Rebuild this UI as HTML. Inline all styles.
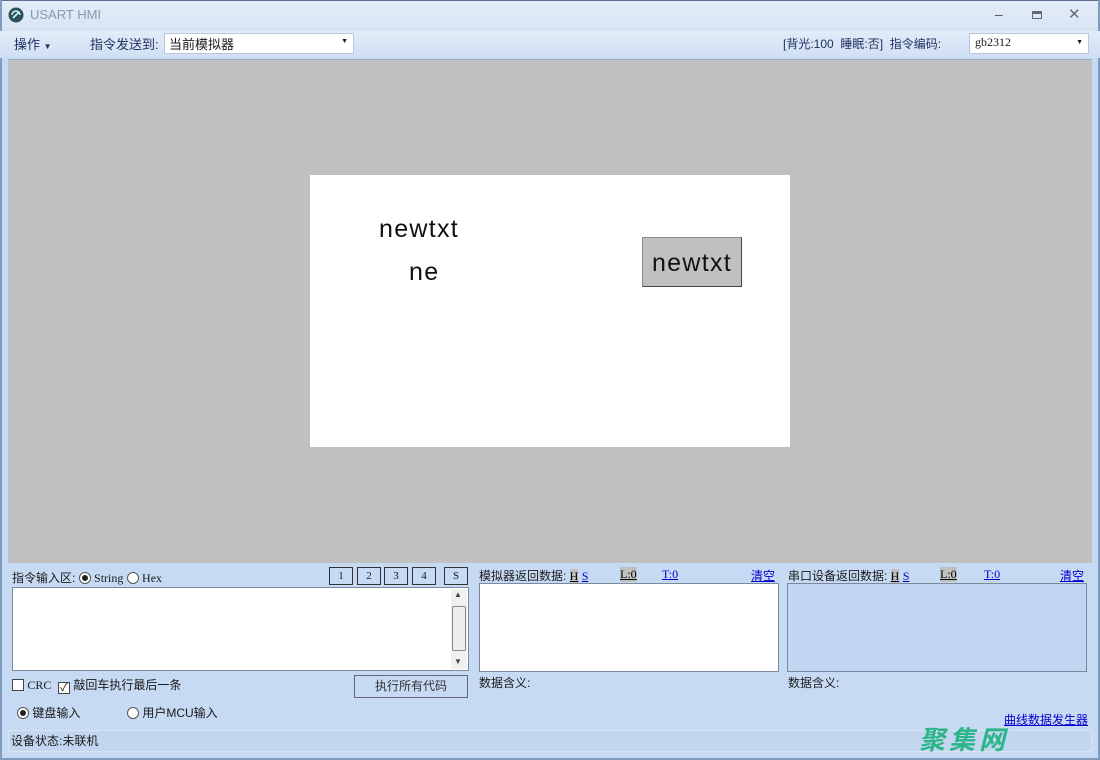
<!DOCTYPE html>
<html><head><meta charset="utf-8"><style>
*{margin:0;padding:0;box-sizing:border-box}
body{width:1100px;height:760px;overflow:hidden;background:#c6daf3;font-family:"Liberation Sans","Noto Sans CJK SC",sans-serif;font-size:12px;color:#1a1a1a;position:relative}
.a{position:absolute;white-space:nowrap}
.mono{font-family:"Liberation Serif","Noto Sans CJK SC",serif}
a,.lk{color:#0000cc;text-decoration:underline}
.box{position:absolute;border:1px solid #7a8a9c}
.nb{position:absolute;top:567px;width:24px;height:18px;border:1px solid #333;font-family:"Liberation Serif",serif;font-size:11px;text-align:center;line-height:16px;background:#c6daf3}
.rad{display:inline-block;width:12px;height:12px;border:1px solid #555;border-radius:50%;background:#fff;vertical-align:-2px;position:relative}
.rad.on::after{content:"";position:absolute;left:2px;top:2px;width:6px;height:6px;border-radius:50%;background:#222}
.chk{display:inline-block;width:12px;height:12px;border:1px solid #444;background:#fff;vertical-align:-2px;position:relative;font-size:11px;line-height:10px;text-align:center}
.hl{background:#c0c0c0;color:#000;text-decoration:underline}
</style></head><body>
<div class="a" style="left:0;top:0;width:1100px;height:31px;background:linear-gradient(#e4edf8,#d7e4f4);border-top:1px solid #5a7090"></div>
<div class="a" style="left:0;top:0;width:2px;height:760px;background:#7f9bbd"></div>
<div class="a" style="right:0;top:0;width:2px;height:760px;background:#7f9bbd"></div>
<div class="a" style="left:0;bottom:0;width:1100px;height:2px;background:#7f9bbd"></div>
<svg class="a" style="left:8px;top:7px" width="16" height="16"><circle cx="8" cy="8" r="7.5" fill="#2f4f5f"/><path d="M4 8a4 4 0 0 1 8 0M5 11l6-6" stroke="#cfe" stroke-width="1.6" fill="none"/></svg>
<div class="a" style="left:30px;top:7px;color:#8898b0;font-size:13px">USART HMI</div>
<div class="a" style="left:995px;top:6px;font-size:14px;color:#555">–</div>
<div class="a" style="left:1032px;top:11px;width:10px;height:8px;border:1px solid #667;border-top-width:3px"></div>
<div class="a" style="left:1068px;top:5px;font-size:15px;color:#667">✕</div>
<div class="a" style="left:0;top:31px;width:1100px;height:27px;background:linear-gradient(#e3ecf8,#cfdff3)"></div>
<div class="a" style="left:14px;top:34px;font-size:13px;color:#203060">操作 <span style="font-size:8px">▼</span></div>
<div class="a" style="left:90px;top:34px;font-size:13px;color:#203060">指令发送到:</div>
<div class="a" style="left:164px;top:33px;width:190px;height:21px;background:#fff;border:1px solid #b8c8dc;padding:0 4px;font-size:13px">当前模拟器<span style="position:absolute;right:5px;top:4px;font-size:7px">▼</span></div>
<div class="a" style="left:783px;top:35px;font-size:12px;color:#203060">[背光:100 &nbsp;睡眠:否] &nbsp;指令编码:</div>
<div class="a" style="left:969px;top:33px;width:120px;height:21px;background:#fff;border:1px solid #b8c8dc;padding:1px 5px;font-size:12px" ><span class="mono">gb2312</span><span style="position:absolute;right:5px;top:5px;font-size:7px">▼</span></div>
<div class="a" style="left:8px;top:59px;width:1084px;height:504px;background:#c0c0c0;border-top:1px solid #9ab"></div>
<div class="a" style="left:310px;top:175px;width:480px;height:272px;background:#fff"></div>
<div class="a" style="left:379px;top:215px;font-size:25px;color:#111;letter-spacing:1.3px">newtxt</div>
<div class="a" style="left:409px;top:258px;font-size:25px;color:#111;letter-spacing:1.3px">ne</div>
<div class="a" style="left:642px;top:237px;width:100px;height:50px;background:#c0c0c0;border:1px solid #888;border-right-color:#444;border-bottom-color:#444;font-size:25px;text-align:center;line-height:50px;color:#111;letter-spacing:1.3px">newtxt</div>
<div class="a" style="left:12px;top:569px">指令输入区: <span class="rad on"></span> <span class="mono" style="font-size:12px">String</span> <span class="rad"></span> <span class="mono" style="font-size:12px">Hex</span></div>
<div class="nb" style="left:329px">1</div><div class="nb" style="left:357px">2</div><div class="nb" style="left:384px">3</div><div class="nb" style="left:412px">4</div><div class="nb" style="left:444px">S</div>
<div class="box" style="left:12px;top:587px;width:457px;height:84px;background:#fff"></div>
<div class="a" style="left:451px;top:589px;width:16px;height:80px;background:#f0f0f0"></div>
<div class="a" style="left:452px;top:606px;width:14px;height:45px;border:1px solid #888;border-radius:2px;background:#eee"></div>
<div class="a" style="left:454px;top:590px;font-size:8px;color:#444">▲</div><div class="a" style="left:454px;top:657px;font-size:8px;color:#444">▼</div>
<div class="a" style="left:12px;top:676px"><span class="chk"></span> <span class="mono" style="font-size:12px">CRC</span> &nbsp;<span class="chk">✓</span> 敲回车执行最后一条</div>
<div class="a" style="left:354px;top:675px;width:114px;height:23px;border:1px solid #667;text-align:center;line-height:21px;color:#333">执行所有代码</div>
<div class="a" style="left:10px;top:698px;width:228px;height:26px;border:1px solid #d0e0f2"></div>
<div class="a" style="left:17px;top:704px"><span class="rad on"></span> 键盘输入</div>
<div class="a" style="left:127px;top:704px"><span class="rad"></span> 用户MCU输入</div>
<div class="a" style="left:8px;top:730px;width:1084px;height:22px;border:1px solid #d6e4f4;background:#c2d6f0"></div>
<div class="a" style="left:11px;top:732px">设备状态:未联机</div>
<div class="a" style="left:479px;top:567px">模拟器返回数据: <span class="hl mono" style="font-size:12px">H</span> <span class="lk mono" style="font-size:12px">S</span></div>
<div class="a mono hl" style="left:620px;top:567px;font-size:12px">L:0</div>
<div class="a mono lk" style="left:662px;top:567px;font-size:12px">T:0</div>
<div class="a lk" style="left:751px;top:567px">清空</div>
<div class="box" style="left:479px;top:583px;width:300px;height:89px;background:#fff"></div>
<div class="a" style="left:479px;top:674px">数据含义:</div>
<div class="a" style="left:788px;top:567px">串口设备返回数据: <span class="hl mono" style="font-size:12px">H</span> <span class="lk mono" style="font-size:12px">S</span></div>
<div class="a mono hl" style="left:940px;top:567px;font-size:12px">L:0</div>
<div class="a mono lk" style="left:984px;top:567px;font-size:12px">T:0</div>
<div class="a lk" style="left:1060px;top:567px">清空</div>
<div class="box" style="left:787px;top:583px;width:300px;height:89px;background:#c2d6f2"></div>
<div class="a" style="left:788px;top:674px">数据含义:</div>
<div class="a lk" style="left:1004px;top:711px">曲线数据发生器</div>
<div class="a" style="left:919px;top:720px;font-size:26px;font-weight:bold;font-style:italic;color:#2db58a;letter-spacing:4px">聚集网</div>
</body></html>
